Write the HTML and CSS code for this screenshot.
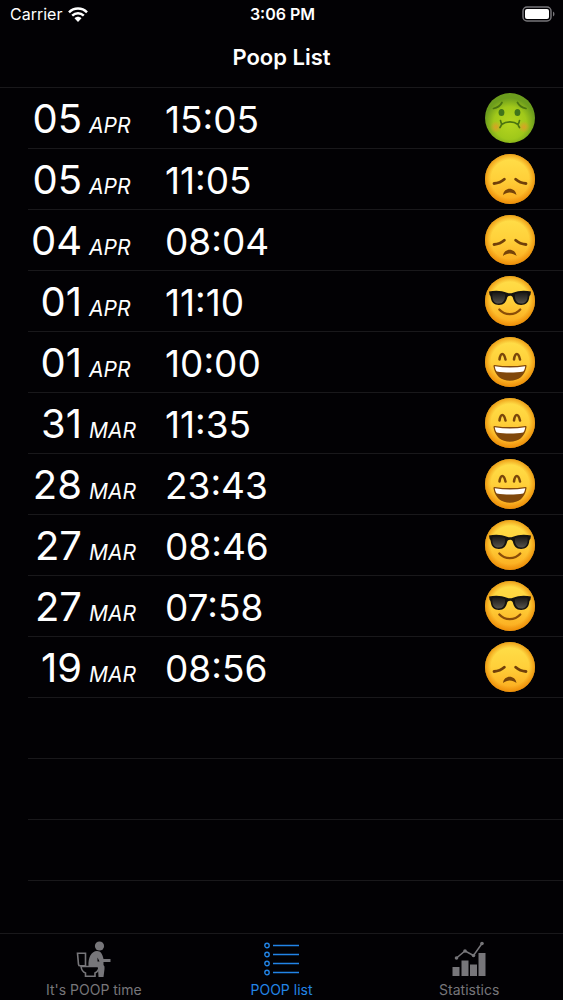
FILE: index.html
```html
<!DOCTYPE html>
<html lang="en">
<head>
<meta charset="utf-8">
<meta name="viewport" content="width=device-width, initial-scale=1">
<title>Poop List</title>
<link rel="stylesheet" href="styles.css">
</head>
<body>
<svg class="sprites" aria-hidden="true">
  <defs>
    <linearGradient id="yellow" x1="0" y1="0" x2="0" y2="1">
      <stop offset="0" stop-color="#ffe04a"/><stop offset=".5" stop-color="#ffd03a"/><stop offset="1" stop-color="#fba81c"/>
    </linearGradient>
    <radialGradient id="edge">
      <stop offset=".76" stop-color="#e87f00" stop-opacity="0"/><stop offset="1" stop-color="#e58200" stop-opacity=".7"/>
    </radialGradient>
    <radialGradient id="green" cy=".6">
      <stop offset="0" stop-color="#b6d61f"/><stop offset=".65" stop-color="#a0c81a"/><stop offset="1" stop-color="#6c9c1d"/>
    </radialGradient>
    <radialGradient id="cheek">
      <stop offset="0" stop-color="#e69a28" stop-opacity=".85"/><stop offset="1" stop-color="#e69a28" stop-opacity="0"/>
    </radialGradient>
    <linearGradient id="lens" x1="0" y1="0" x2="0" y2="1">
      <stop offset="0" stop-color="#1b1a18"/><stop offset="1" stop-color="#55534c"/>
    </linearGradient>
    <symbol id="sick" viewBox="0 0 50 50">
      <circle cx="25" cy="25" r="25" fill="url(#green)"/>
      <circle cx="11" cy="34" r="6" fill="url(#cheek)"/><circle cx="39" cy="34" r="6" fill="url(#cheek)"/>
      <g fill="none" stroke="#4a7410" stroke-width="1.700" stroke-linecap="round">
        <path d="M8.500 15.500c4-.8 7-3 8.500-6M41 15.500c-4-.8-7-3-8.500-6"/>
        <path d="M17 31.500c-.8-1.400-1.300-2.600-1.500-4M15 34.500c.7-1 1.100-1.800 1.500-3 5-3.400 12-3.400 16.500 0 .4 1.200.8 2 1.500 3M33 31.500c.8-1.400 1.300-2.600 1.500-4"/>
      </g>
      <ellipse cx="16.500" cy="19.500" rx="2.900" ry="3.600" fill="#41741b"/><ellipse cx="32.500" cy="19.500" rx="2.900" ry="3.600" fill="#41741b"/>
    </symbol>
    <symbol id="sad" viewBox="0 0 50 50">
      <circle cx="25" cy="25" r="25" fill="url(#yellow)"/><circle cx="25" cy="25" r="25" fill="url(#edge)"/>
      <path d="M9 29.500c4.200-.3 7.300-1.500 10.300-4.200M41 29.500c-4.200-.3-7.300-1.500-10.300-4.200" fill="none" stroke="#70400a" stroke-width="2.800" stroke-linecap="round"/>
      <path d="M18 41c.8-8.500 12.500-8.500 13.500 0-3.800-3.500-9.700-3.500-13.500 0z" fill="#764309"/>
    </symbol>
    <symbol id="cool" viewBox="0 0 50 50">
      <circle cx="25" cy="25" r="25" fill="url(#yellow)"/><circle cx="25" cy="25" r="25" fill="url(#edge)"/>
      <path d="M4 15.500c6-1.300 13-1 18 1.300 2 .7 4 .7 6 0 5-2.300 12-2.600 18-1.300l-.6 3.500c-1 .5-1 1.500-1.300 3.300-.7 4.500-3.500 6.700-8 6.700-5 0-7.300-3-8.300-7.500-.5-2.300-5-2.300-5.600 0-1 4.500-3.300 7.500-8.300 7.500-4.500 0-7.300-2.200-8-6.700-.3-1.800-.4-2.800-1.300-3.300z" fill="#141310"/>
      <path d="M7.500 17.300c4.500-.8 9-.5 12.500 1 .5 5.500-1.700 9.200-6 9.200-6 0-7-4.300-6.500-10.200zM42.500 17.300c-4.500-.8-9-.5-12.500 1-.5 5.500 1.700 9.200 6 9.200 6 0 7-4.300 6.500-10.200z" fill="url(#lens)"/>
      <path d="M14.300 33.500c5.500 6.200 15.500 6.200 21 0" fill="none" stroke="#8a4d08" stroke-width="2.200" stroke-linecap="round"/>
    </symbol>
    <symbol id="happy" viewBox="0 0 50 50">
      <circle cx="25" cy="25" r="25" fill="url(#yellow)"/><circle cx="25" cy="25" r="25" fill="url(#edge)"/>
      <path d="M14.500 22.500c1-7.500 4.500-7.500 6 0M29 22.500c1-7.500 4.500-7.500 6 0" fill="none" stroke="#7a470b" stroke-width="2.500" stroke-linecap="round"/>
      <path d="M8.500 29.300c-.2-1 .3-1.500 1.300-1.400 10 1.600 20 1.600 30.400 0 1-.1 1.500.4 1.300 1.400C40 39 33.500 43.800 25 43.800S10 39 8.500 29.300z" fill="#80480b"/>
      <path d="M9.800 29.200c10 1.600 20.400 1.600 30.400 0-.2 2.300-.9 4-2 5.300-8 1.300-18.400 1.300-26.400 0-1.100-1.300-1.800-3-2-5.300z" fill="#fff"/>
    </symbol>
  </defs>
</svg>
<div class="app">
  <header class="top">
    <div class="status">
      <span class="carrier">Carrier
        <svg class="wifi" viewBox="0 0 20 15" aria-label="Wi-Fi"><g fill="none" stroke="#fff" stroke-width="2.500"><path d="M1 5.300c5-5 13-5 18 0M4.200 8.700c3.400-3.200 8.200-3.200 11.600 0"/></g><path d="M6.500 11.300c2-2 5-2 7 0L10 15z" fill="#fff"/></svg>
      </span>
      <span class="clock">3:06 PM</span>
      <svg class="battery" viewBox="0 0 33 16" aria-label="Battery full"><rect x="1" y="1" width="28" height="14" rx="4" fill="none" stroke="#77767a" stroke-width="1.500"/><rect x="3" y="3" width="24" height="10" rx="2" fill="#fff"/><path d="M31 5.500c2 1 2 4 0 5z" fill="#77767a"/></svg>
    </div>
    <h1 class="title">Poop List</h1>
  </header>
  <main class="content">
    <ul class="list">
      <li class="row"><span class="day">05</span><span class="month">APR</span><span class="time">15:05</span><svg class="mood" role="img" aria-label="Nauseated"><use href="#sick"/></svg></li>
      <li class="row"><span class="day">05</span><span class="month">APR</span><span class="time">11:05</span><svg class="mood" role="img" aria-label="Sad"><use href="#sad"/></svg></li>
      <li class="row"><span class="day">04</span><span class="month">APR</span><span class="time">08:04</span><svg class="mood" role="img" aria-label="Sad"><use href="#sad"/></svg></li>
      <li class="row"><span class="day">01</span><span class="month">APR</span><span class="time">11:10</span><svg class="mood" role="img" aria-label="Cool"><use href="#cool"/></svg></li>
      <li class="row"><span class="day">01</span><span class="month">APR</span><span class="time">10:00</span><svg class="mood" role="img" aria-label="Happy"><use href="#happy"/></svg></li>
      <li class="row"><span class="day">31</span><span class="month">MAR</span><span class="time">11:35</span><svg class="mood" role="img" aria-label="Happy"><use href="#happy"/></svg></li>
      <li class="row"><span class="day">28</span><span class="month">MAR</span><span class="time">23:43</span><svg class="mood" role="img" aria-label="Happy"><use href="#happy"/></svg></li>
      <li class="row"><span class="day">27</span><span class="month">MAR</span><span class="time">08:46</span><svg class="mood" role="img" aria-label="Cool"><use href="#cool"/></svg></li>
      <li class="row"><span class="day">27</span><span class="month">MAR</span><span class="time">07:58</span><svg class="mood" role="img" aria-label="Cool"><use href="#cool"/></svg></li>
      <li class="row"><span class="day">19</span><span class="month">MAR</span><span class="time">08:56</span><svg class="mood" role="img" aria-label="Sad"><use href="#sad"/></svg></li>
      <li class="row" aria-hidden="true"></li>
      <li class="row" aria-hidden="true"></li>
      <li class="row" aria-hidden="true"></li>
    </ul>
  </main>
  <nav class="tabs">
    <a class="tab" href="#time">
      <svg class="icon" viewBox="0 0 36 36" aria-hidden="true"><g fill="none" stroke="currentColor" stroke-width="1.600"><path d="M1.500 12.300h8v12.500h-5.500q-1.300 0-1.500-1.500z"/><path d="M5 25.500h18c0 3.500-1.500 5.300-4 6.500v3.300H9.500V32C6.500 31 5.500 29 5 25.500z"/></g><circle cx="23.500" cy="5" r="4.600" fill="currentColor"/><path d="M12.500 25c-.5-8.500 3-15 8.500-15 4 0 5.500 3.500 6.500 8h7v3h-7v3q1.500 1 1 4l-1 8h-5L22 27q-.3-2-2-2zM21.500 16.500v4h2z" fill="currentColor" fill-rule="evenodd"/></svg>
      <span>It's POOP time</span>
    </a>
    <a class="tab active" href="#list" aria-current="page">
      <svg class="icon" viewBox="0 0 36 36" aria-hidden="true"><g fill="none" stroke="currentColor" stroke-width="1.400"><circle cx="3" cy="4.500" r="2.200"/><circle cx="3" cy="13.500" r="2.200"/><circle cx="3" cy="22.500" r="2.200"/><circle cx="3" cy="31.500" r="2.200"/><path d="M9 4.500h26M9 13.500h26M9 22.500h26M9 31.500h26"/></g></svg>
      <span>POOP list</span>
    </a>
    <a class="tab" href="#statistics">
      <svg class="icon" viewBox="0 0 36 36" aria-hidden="true"><g fill="currentColor"><path d="M1.500 26h7v9h-7zM10.500 19.500h7V35h-7zM19 23.500h7V35h-7zM27.500 12h7v23h-7z"/><circle cx="5.500" cy="17" r="1.800"/><circle cx="14" cy="10" r="1.800"/><circle cx="22.500" cy="14.500" r="1.800"/><circle cx="31" cy="2.500" r="1.800"/></g><path d="M5.500 17L14 10l8.500 4.500L31 2.500" fill="none" stroke="currentColor" stroke-width="1.500"/></svg>
      <span>Statistics</span>
    </a>
  </nav>
</div>
</body>
</html>
```
FILE: styles.css
```css
* {
  box-sizing: border-box;
}

body {
  margin: 0;
  background: #020104;
  color: #fff;
  font-family: Inter, "Liberation Sans", sans-serif;
}

.sprites {
  position: absolute;
  width: 0;
  height: 0;
}

.app {
  display: flex;
  flex-direction: column;
  min-height: 100vh;
}

.top {
  border-bottom: 1px solid #19181b;
}

.status {
  display: grid;
  grid-template-columns: 1fr auto 1fr;
  align-items: center;
  height: 28px;
  padding: 0 8px 0 10px;
  font-size: 16px;
}

.carrier {
  display: flex;
  align-items: center;
  gap: 6px;
}

.wifi {
  width: 20px;
  height: 15px;
}

.clock {
  font-weight: 600;
}

.battery {
  width: 33px;
  height: 16px;
  justify-self: end;
}

.title {
  margin: 0;
  height: 59px;
  line-height: 59px;
  text-align: center;
  font-size: 22px;
  font-weight: 600;
}

.content {
  flex: 1;
}

.list {
  list-style: none;
  margin: 0;
  padding: 0 0 0 28px;
}

.row {
  display: grid;
  grid-template-columns: 54px 69px 1fr 50px;
  column-gap: 7px;
  align-items: baseline;
  height: 61px;
  padding-right: 28px;
  border-bottom: 1px solid #19181b;
  line-height: 62px;
}

.day {
  text-align: right;
  font-size: 40px;
}

.month {
  font-size: 21px;
  font-style: italic;
}

.time {
  font-size: 37px;
}

.mood {
  width: 50px;
  height: 50px;
  align-self: start;
  margin-top: 5px;
}

.tabs {
  display: flex;
  height: 67px;
  border-top: 1px solid #19181b;
}

.tab {
  flex: 1;
  display: flex;
  flex-direction: column;
  align-items: center;
  gap: 4px;
  padding-top: 7px;
  color: #77767a;
  font-size: 14px;
  line-height: 18px;
  text-decoration: none;
}

.tab.active {
  color: #2284e6;
}

.icon {
  width: 36px;
  height: 36px;
}
```
